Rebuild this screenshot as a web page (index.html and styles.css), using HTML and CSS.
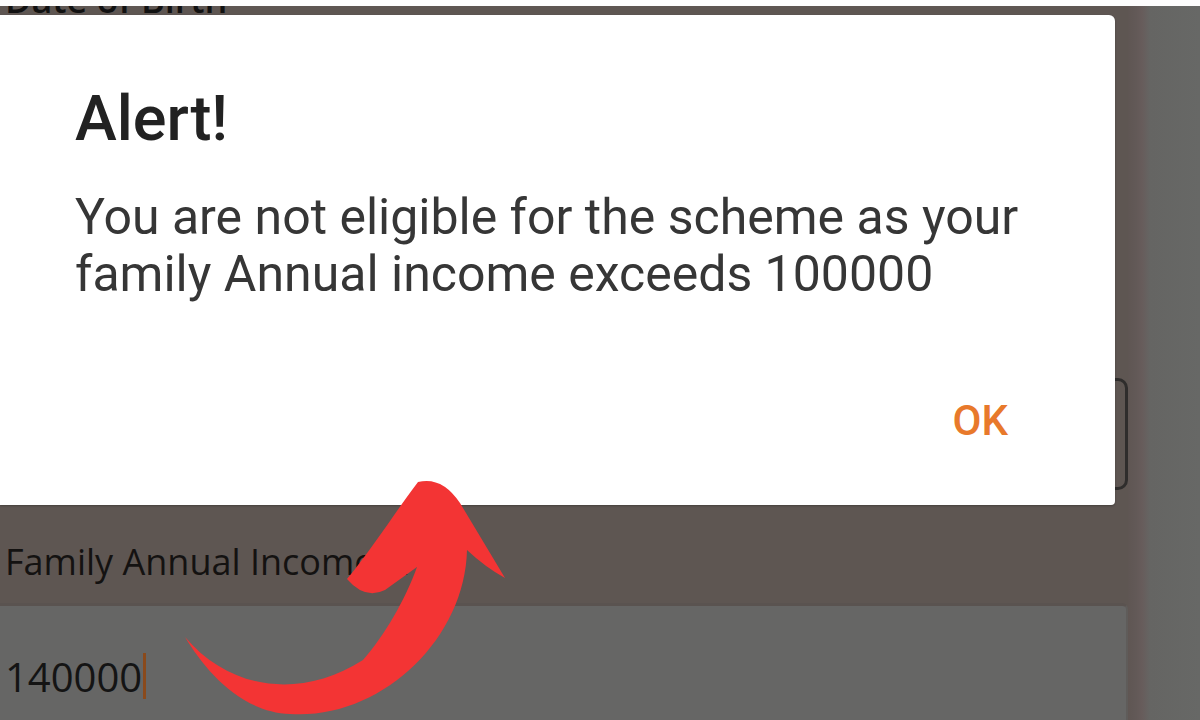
FILE: index.html
```html
<!DOCTYPE html>
<html>
<head>
  <title>Scheme Application</title>
  <meta name="viewport" content="width=device-width, initial-scale=1.0">
  <link rel="stylesheet" href="styles.css">
</head>
<body>
  <div class="screen">
    <div class="form">
      <label class="field-label dob-label">Date of Birth</label>
      <div class="outlined-field"></div>

      <label class="field-label income-label">Family Annual Income (₹)</label>
      <div class="text-field">
        <span class="field-value">140000</span><span class="caret"></span>
      </div>
    </div>
    <div class="screen-edge"></div>
  </div>

  <!-- eligibility alert -->
  <div class="dialog" role="alertdialog">
    <h2 class="dialog-title">Alert!</h2>
    <p class="dialog-message">You are not eligible for the scheme as your family Annual income exceeds 100000</p>
    <div class="dialog-actions">
      <button class="dialog-button">OK</button>
    </div>
  </div>

  <!-- pointer arrow drawn over everything -->
  <svg class="pointer-arrow" width="1200" height="720" viewBox="0 0 1200 720">
    <path d="M 185 637
             C 230 690, 300 700, 363 660
             C 385 635, 405 600, 417 567
             L 385 590
             Q 365 600, 347 579
             C 375 545, 400 505, 418 482
             Q 442 476, 460 503
             L 505 578
             Q 485 567, 467 550
             C 465 640, 380 720, 290 714
             C 240 712, 205 670, 185 637 Z" fill="#f33434"/>
  </svg>
</body>
</html>
```

FILE: styles.css
```css
body {
  margin: 0;
  padding-top: 6px;
  background: #fdfdfd;
  overflow: hidden;
}
.screen {
  height: 714px;
  display: flex;
  overflow: hidden;
  background: #5e5652;
}
.form {
  width: 1128px;
  display: flex;
  flex-direction: column;
}
.screen-edge {
  flex: 1;
  background: linear-gradient(to right, #5f5653 0, #625957 8px, #675c5b 14px, #656563 22px, #676866 100%);
}
.field-label {
  font-family: "Open Sans", "Liberation Sans", sans-serif;
  font-size: 36px;
  line-height: 44px;
  color: #141211;
  padding-left: 5px;
}
.dob-label {
  margin-top: -28px;
  font-weight: 600;
  color: #111111;
}
.outlined-field {
  margin-top: 356px;
  height: 106px;
  border: 3px solid #2f2d2c;
  border-radius: 10px;
}
.income-label {
  margin-top: 50px;
}
.text-field {
  margin-top: 19px;
  flex: 1;
  background: #666665;
  border-top: 3px solid #5a5350;
  border-right: 2px solid #5f5c5a;
  border-top-right-radius: 6px;
  padding: 49px 0 0 5px;
  display: flex;
  align-items: flex-start;
}
.field-value {
  font-family: "Open Sans", "Liberation Sans", sans-serif;
  font-size: 40px;
  line-height: 44px;
  color: #141414;
}
.caret {
  width: 3px;
  height: 46px;
  margin-left: 1px;
  margin-top: -2px;
  background: #8a4a1c;
}
.dialog {
  position: absolute;
  top: 15px;
  left: 0;
  width: 1115px;
  height: 490px;
  box-sizing: border-box;
  padding: 69px 75px 60px 75px;
  background: #ffffff;
  border-radius: 0 6px 4px 0;
  box-shadow: 0 1px 2px rgba(0, 0, 0, 0.25);
  display: flex;
  flex-direction: column;
  font-family: Roboto, "Liberation Sans", sans-serif;
}
.dialog-title {
  margin: 0;
  font-size: 63px;
  font-weight: 500;
  line-height: 70px;
  color: #222222;
}
.dialog-message {
  margin: 35px 0 0 0;
  font-size: 50px;
  line-height: 57px;
  color: #363636;
}
.dialog-actions {
  margin-top: auto;
  display: flex;
  justify-content: flex-end;
}
.dialog-button {
  margin-right: 32px;
  padding: 0;
  border: none;
  background: none;
  font-family: Roboto, "Liberation Sans", sans-serif;
  font-size: 42px;
  font-weight: 500;
  line-height: 49px;
  color: #e8792b;
}
.pointer-arrow {
  position: absolute;
  top: 0;
  left: 0;
  pointer-events: none;
}
```
